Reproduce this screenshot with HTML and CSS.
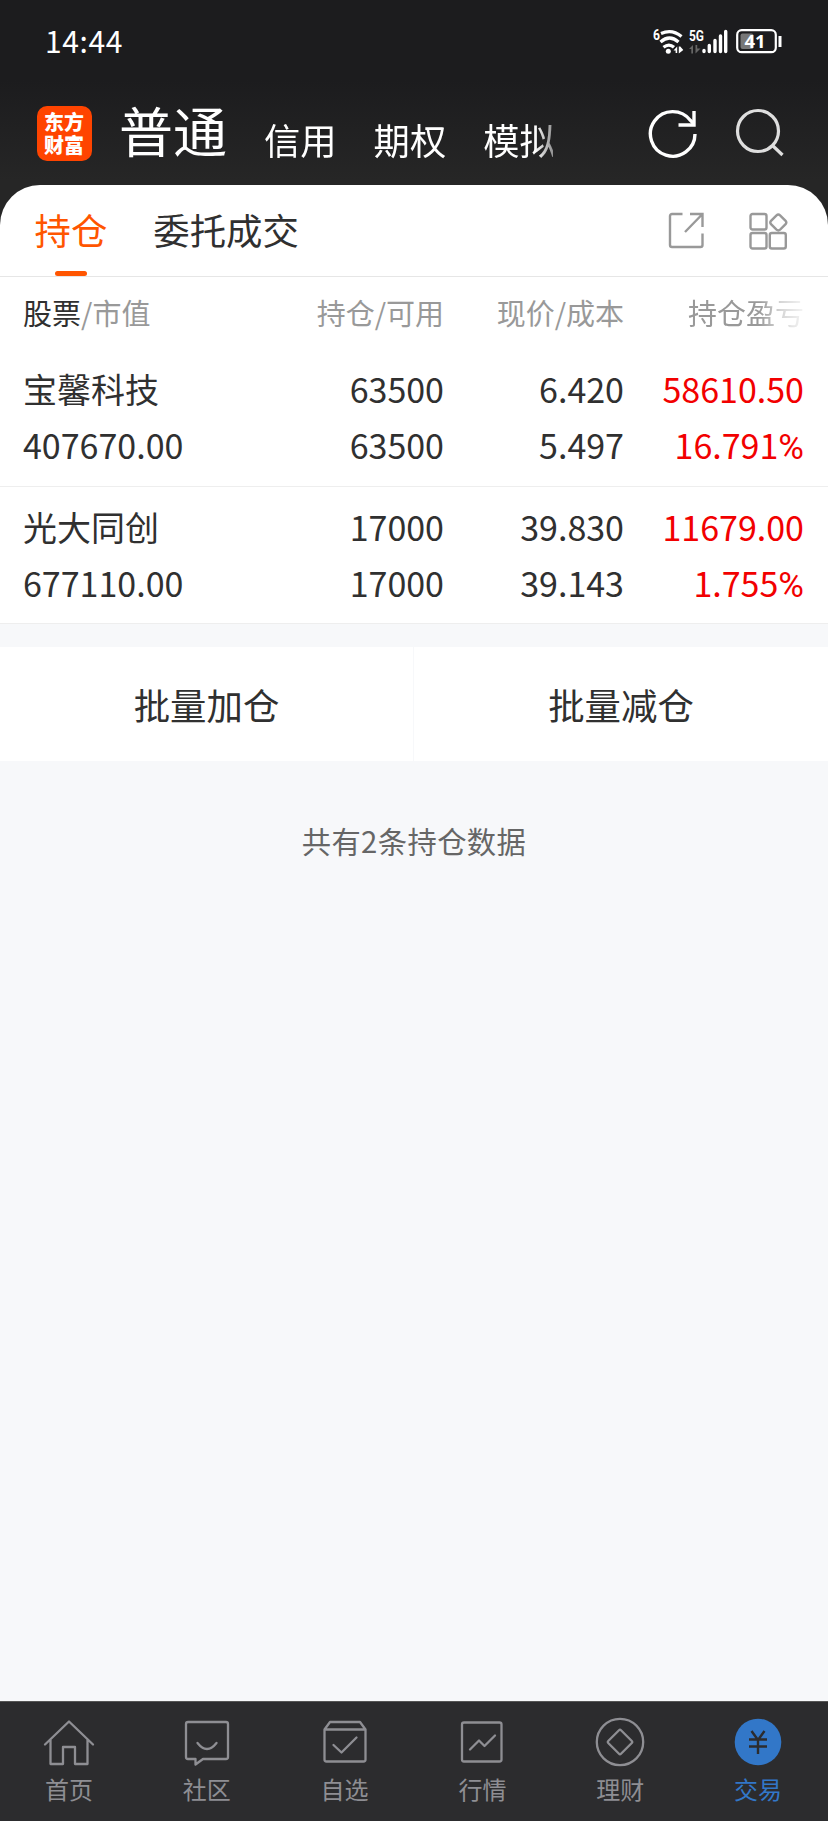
FILE: index.html
```html
<!DOCTYPE html>
<html lang="zh-CN">
<head>
  <meta charset="UTF-8">
  <meta name="viewport" content="width=device-width, initial-scale=1.0">
  <title>持仓</title>
  <link rel="stylesheet" href="styles.css">
</head>
<body>
  <header class="top">
    <div class="status">
      <span class="time">14:44</span>
      <svg class="status-icons" width="132" height="32" viewBox="652 24 132 32">
        <text class="tiny" x="653" y="40" font-size="14" textLength="7" lengthAdjust="spacingAndGlyphs">6</text>
        <g fill="none" stroke="#fff" stroke-width="3.2">
          <path d="M661 33.500q11-5 20.500 3"/>
          <path d="M660.500 42q9-8 18 0"/>
          <path d="M663.500 47.300q5.500-4.500 10.500 0"/>
        </g>
        <circle cx="668.300" cy="51.300" r="2.500" fill="#fff"/>
        <path d="M673.500 50.500l3.700-4v6.500h-1.600v-2.500zM678.800 46.500h1.500l3 3.500-4.500 3.500z" fill="#fff"/>
        <text class="tiny" x="689" y="41" font-size="14" textLength="15" lengthAdjust="spacingAndGlyphs">5G</text>
        <path d="M689 49l4-4v8.500h-1.700v-4.500zM695.500 45h1.700v3.500h3.300l-5 5z" fill="#666"/>
        <g stroke="#fff" stroke-width="3.400" stroke-linecap="round">
          <path d="M704 50.500v1M709.300 45.500v6M715 40.500v11M720.500 36v15.500M725.700 31.500v20"/>
        </g>
        <rect x="737.200" y="30.200" width="38.600" height="22" rx="4.500" fill="none" stroke="#fff" stroke-width="2.200"/>
        <rect x="740.500" y="33.500" width="13" height="15.500" rx="2" fill="#777"/>
        <path d="M780 36v11" stroke="#fff" stroke-width="3"/>
        <text class="batt" x="744.500" y="47.500" font-size="18" textLength="21" lengthAdjust="spacingAndGlyphs">41</text>
      </svg>
    </div>
    <div class="bar">
      <div class="logo"><span>东方</span><span>财富</span></div>
      <nav class="accounts">
        <span class="current">普通</span>
        <span>信用</span>
        <span>期权</span>
        <span>模拟</span>
      </nav>
      <svg class="refresh" width="52" height="52" viewBox="0 0 52 52" fill="none" stroke="#fff" stroke-width="3.400">
        <path d="M48 27A22.300 22.300 0 1 1 43.500 13.500L46.500 16.500"/>
        <path d="M47 4v14H31.500"/>
      </svg>
      <svg class="search" width="52" height="52" viewBox="0 0 52 52" fill="none" stroke="#dedede" stroke-width="3.200">
        <circle cx="25" cy="24" r="20.500"/>
        <path d="M39.500 38.500l10 9.500"/>
      </svg>
    </div>
  </header>

  <main class="sheet">
    <div class="tabs">
      <span class="tab active">持仓</span>
      <span class="tab">委托成交</span>
      <svg class="tool" width="40" height="40" viewBox="0 0 40 40">
        <path d="M15.500 4H5a2 2 0 0 0-2 2v29a2 2 0 0 0 2 2h28.500a2 2 0 0 0 2-2V23.500"/>
        <path d="M23 4h12.500v13M35.500 4L18 22"/>
      </svg>
      <svg class="tool" width="40" height="40" viewBox="0 0 40 40">
        <rect x="2.500" y="4" width="16" height="15.500" rx="2"/>
        <rect x="2.500" y="23" width="16" height="15.500" rx="2"/>
        <rect x="21.800" y="23" width="16" height="15.500" rx="2"/>
        <path d="M28.500 5.300q1.800-1.600 3.600 0l5.500 5.500q1.400 1.700 0 3.400l-5.500 5.500q-1.800 1.500-3.600 0L23 14.200q-1.400-1.700 0-3.400z"/>
      </svg>
    </div>

    <div class="grid head">
      <span><b>股票</b>/市值</span>
      <span>持仓/可用</span>
      <span>现价/成本</span>
      <span class="fade">持仓盈亏</span>
    </div>
    <div class="grid row">
      <span>宝馨科技<br>407670.00</span>
      <span>63500<br>63500</span>
      <span>6.420<br>5.497</span>
      <span class="up">58610.50<br>16.791<i>%</i></span>
    </div>
    <div class="grid row">
      <span>光大同创<br>677110.00</span>
      <span>17000<br>17000</span>
      <span>39.830<br>39.143</span>
      <span class="up">11679.00<br>1.755<i>%</i></span>
    </div>
  </main>

  <div class="batch">
    <button>批量加仓</button>
    <button>批量减仓</button>
  </div>
  <p class="count">共有2条持仓数据</p>

  <footer class="nav">
    <a class="item">
      <svg width="52" height="52" viewBox="0 0 52 52">
        <path d="M2 27.500L26 4.500l24 23M7.500 23v24H20V30h12v17h12.500V23"/>
      </svg>
      首页
    </a>
    <a class="item">
      <svg width="52" height="52" viewBox="0 0 52 52">
        <path d="M7 5h38a2 2 0 0 1 2 2v33a2 2 0 0 1-2 2H22l-7.500 5.500V42H7a2 2 0 0 1-2-2V7a2 2 0 0 1 2-2z"/>
        <path d="M16.500 26q9.500 12 19 0"/>
      </svg>
      社区
    </a>
    <a class="item">
      <svg width="52" height="52" viewBox="0 0 52 52">
        <path d="M5.500 12.500L11 5h30l5.500 7.500v30a2 2 0 0 1-2 2h-37a2 2 0 0 1-2-2zh41"/>
        <path d="M14.500 28l8 7.500 15-15"/>
      </svg>
      自选
    </a>
    <a class="item">
      <svg width="52" height="52" viewBox="0 0 52 52">
        <rect x="6" y="5.500" width="39.500" height="39" rx="2"/>
        <path d="M14 32.500l9-9 5.500 5.500L39 18.500"/>
      </svg>
      行情
    </a>
    <a class="item">
      <svg width="52" height="52" viewBox="0 0 52 52">
        <circle cx="26" cy="25" r="23.200"/>
        <path d="M25 13.300q1-1 2 0L37.800 24q1 1 0 2L27 36.800q-1 1-2 0L14.200 26q-1-1 0-2z"/>
      </svg>
      理财
    </a>
    <a class="item on">
      <svg width="52" height="52" viewBox="0 0 52 52">
        <circle class="disc" cx="26" cy="25" r="23.300"/>
        <path class="yuan" d="M19.500 14L26 23l6.500-9M26 23v14M17 22.500h18M17 29.500h18"/>
      </svg>
      交易
    </a>
  </footer>
</body>
</html>
```
FILE: styles.css
```css
* {
  box-sizing: border-box;
}
body {
  margin: 0;
  height: 1821px;
  display: flex;
  flex-direction: column;
  background: #f7f8fa;
  color: #303030;
  font-family: "Noto Sans CJK SC", sans-serif;
  overflow: hidden;
}
.top {
  height: 225px;
  flex: none;
  background: linear-gradient(#1c1c1e 0, #1c1c1e 80px, #262626 180px);
}
.status {
  height: 80px;
  padding: 0 44px 0 45px;
  display: flex;
  align-items: center;
  justify-content: space-between;
  color: #fff;
}
.time {
  font-size: 30px;
  letter-spacing: .6px;
}
.status-icons text {
  fill: #fff;
  font-weight: 700;
}
.tiny {
  font-family: Roboto, sans-serif;
}
.batt {
  font-family: "Open Sans", sans-serif;
}
.bar {
  height: 105px;
  padding: 1px 42px 0 36.500px;
  display: flex;
  align-items: center;
  color: #fff;
}
.logo {
  width: 55px;
  height: 55px;
  padding-top: 4px;
  display: flex;
  flex-direction: column;
  border-radius: 10px;
  background: #ff4400;
  font-size: 20px;
  font-weight: 900;
  line-height: 23px;
  text-align: center;
}
.accounts {
  margin: -2px 0 0 27.500px;
  width: 434px;
  height: 86px;
  line-height: 78px;
  display: flex;
  align-items: baseline;
  gap: 37px;
  font-size: 36.300px;
  white-space: nowrap;
  mask-image: linear-gradient(to right, #000 416px, rgba(255, 255, 255, .5) 434px);
}
.accounts span {
  padding-top: 2px;
  transform: translateY(1.500px);
}
.accounts .current {
  font-size: 54px;
  transform: none;
}
.refresh {
  margin-left: 94px;
}
.search {
  margin-left: 34px;
}

.sheet {
  margin-top: -40px;
  background: #fff;
  border-radius: 40px 40px 0 0;
}
.tabs {
  height: 92px;
  padding: 0 40px 0 34.500px;
  display: flex;
  align-items: center;
  border-bottom: 1px solid #e6e6e6;
}
.tab {
  height: 91px;
  margin-right: 46px;
  font-size: 36.400px;
  line-height: 88px;
}
.active {
  color: #ff5500;
  display: flex;
  flex-direction: column;
  align-items: center;
}
.active::after {
  content: "";
  width: 32px;
  height: 5px;
  margin-top: -2px;
  border-radius: 3px;
  background: #ff5500;
}
.tool {
  margin-bottom: 2px;
  fill: none;
  stroke: #999;
  stroke-width: 2.400;
}
.tool + .tool {
  margin-left: 41px;
}
.tab + .tool {
  margin-left: auto;
}
.grid {
  padding: 0 24px 0 23px;
  display: grid;
  grid-template-columns: 1fr 200px 180px 180px;
  text-align: right;
}
.grid span:first-child {
  text-align: left;
}
.head {
  height: 72px;
  font-size: 29px;
  line-height: 71px;
  color: #999;
}
.head b {
  font-weight: 400;
  color: #303030;
}
.fade {
  mask-image: linear-gradient(to right, #000 135px, rgba(0, 0, 0, .4) 157px, rgba(0, 0, 0, .1) 180px);
}
.row {
  height: 138px;
  padding-top: 12px;
  font-size: 34px;
  line-height: 55.500px;
  border-bottom: 1px solid #eee;
}
.row + .row {
  height: 137px;
}
.up {
  color: #f20000;
}
.up i {
  font-family: Roboto, sans-serif;
  font-size: 35px;
  font-style: normal;
  line-height: 1;
}

.batch {
  margin-top: 23px;
  display: flex;
  gap: 1px;
}
.batch button {
  width: 413px;
  height: 114px;
  border: none;
  background: #fff;
  color: #303030;
  font-family: inherit;
  font-size: 36.400px;
}
.batch button:last-child {
  width: 414px;
}
.count {
  margin: 59px 0 0;
  text-align: center;
  font-size: 29.300px;
  letter-spacing: .4px;
  line-height: 40px;
  color: #666;
}

.nav {
  height: 120px;
  margin-top: auto;
  padding-right: 1px;
  display: flex;
  background: #2c2c2e;
  border-top: 1px solid #555;
}
.item {
  flex: 1;
  padding-top: 15px;
  display: flex;
  flex-direction: column;
  align-items: center;
  color: #8e8e93;
  font-size: 24px;
  line-height: 40px;
}
.item svg {
  fill: none;
  stroke: #8e8e93;
  stroke-width: 2.300;
  stroke-linejoin: round;
  stroke-linecap: round;
}
.on {
  color: #3277c8;
}
.item .disc {
  fill: #3277c8;
  stroke: none;
}
.item .yuan {
  stroke: #2c2c2e;
  stroke-width: 2.400;
  stroke-linecap: butt;
}
```
